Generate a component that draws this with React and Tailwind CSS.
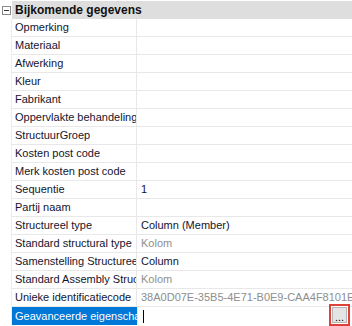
const rows = [
  { label: "Opmerking" },
  { label: "Materiaal" },
  { label: "Afwerking" },
  { label: "Kleur" },
  { label: "Fabrikant" },
  { label: "Oppervlakte behandeling" },
  { label: "StructuurGroep" },
  { label: "Kosten post code" },
  { label: "Merk kosten post code" },
  { label: "Sequentie", value: "1" },
  { label: "Partij naam" },
  { label: "Structureel type", value: "Column (Member)" },
  { label: "Standard structural type", value: "Kolom", muted: true },
  { label: "Samenstelling Structureel type", value: "Column" },
  { label: "Standard Assembly Structural type", value: "Kolom", muted: true },
  { label: "Unieke identificatiecode", value: "38A0D07E-35B5-4E71-B0E9-CAA4F8101E46", muted: true },
];

export default function App() {
  return (
    <div
      className="w-[352px] h-[326px] overflow-hidden bg-white pt-px text-[11px] text-[#14142e]"
      style={{ fontFamily: '"Liberation Sans", Arial, sans-serif' }}
    >
      {/* Category header */}
      <div className="flex h-[18px]">
        <div className="w-[12px] flex items-center justify-start pl-[2px]">
          <div className="w-[9px] h-[9px] border border-[#8a8a8a] flex items-center justify-center">
            <div className="w-[5px] h-px bg-[#333]" />
          </div>
        </div>
        <div className="flex-1 bg-[#dedede] flex items-center pl-[3px] text-[12px] font-bold text-[#111] whitespace-nowrap overflow-hidden">
          Bijkomende gegevens
        </div>
      </div>

      {rows.map((r) => (
        <div key={r.label} className="flex h-[18px]">
          <div className="w-[12px] border-r border-[#ececec]" />
          <div className="w-[125px] border-b border-r border-[#e8e8e8] flex items-center pl-[3px] whitespace-nowrap overflow-hidden">
            {r.label}
          </div>
          <div
            className={`flex-1 border-b border-[#e8e8e8] flex items-center pl-[4px] whitespace-nowrap overflow-hidden ${
              r.muted ? "text-[#8e8e8e]" : ""
            }`}
          >
            {r.value}
          </div>
        </div>
      ))}

      {/* Selected row */}
      <div className="flex h-[18px] relative">
        <div className="w-[12px] border-r border-[#ececec]" />
        <div className="w-[125px] bg-[#0078d7] text-white flex items-center pl-[3px] whitespace-nowrap overflow-hidden">
          Geavanceerde eigenschappen
        </div>
        <div className="flex-1 flex items-center pl-[5px] border-l border-[#e8e8e8]">
          <div className="w-px h-[13px] bg-black" />
        </div>
        <div className="absolute right-[2px] bottom-[-1px] w-[21px] h-[22px] border-2 border-[#e0403a] bg-white p-px">
          <div className="w-full h-full bg-[#e4e4e4] border border-[#b5b5b5] flex items-end justify-center text-[11px] leading-[10px] text-black">
            ...
          </div>
        </div>
      </div>
    </div>
  );
}
